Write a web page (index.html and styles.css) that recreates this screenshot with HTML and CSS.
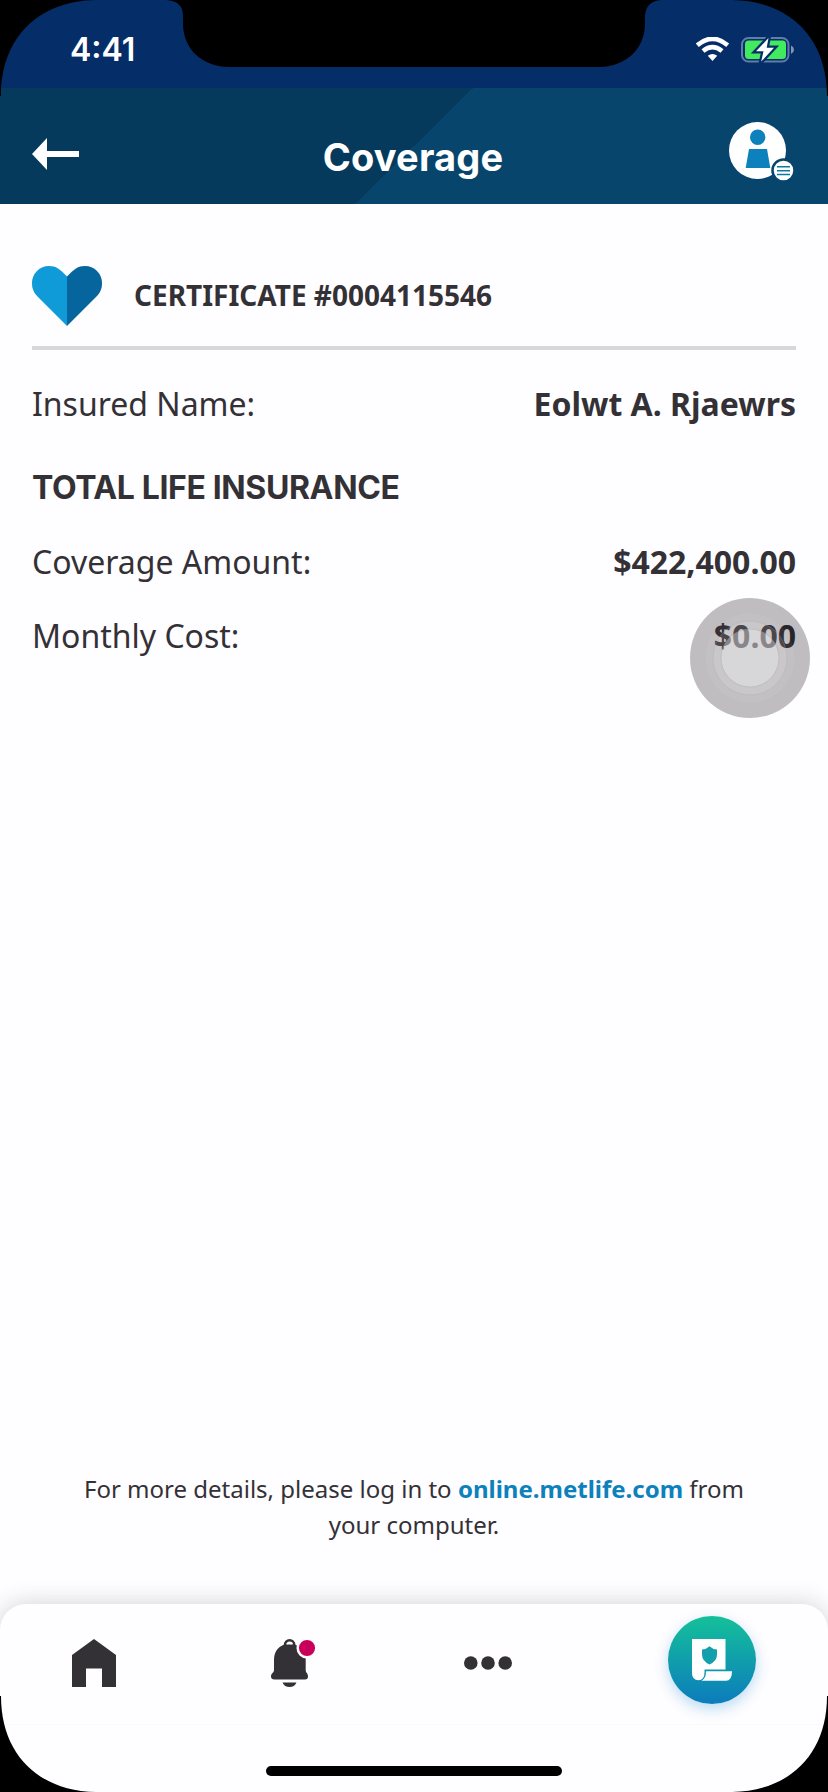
FILE: index.html
```html
<!DOCTYPE html>
<html lang="en">
<head>
<meta charset="utf-8">
<title>Coverage</title>
<link rel="stylesheet" href="styles.css">
</head>
<body>
<div class="screen">
  <div class="status">
    <span class="time">4:41</span>
    <svg class="status-icons" width="98" height="26" viewBox="0 0 98 26">
      <g fill="none" stroke="#fff" stroke-width="4.6">
        <path d="M1.3 8.2Q16.5-4.600 31.700 8.200"/>
        <path d="M7 14Q16.500 6.200 26 14"/>
      </g>
      <path d="M11.800 18.700Q16.500 15.200 21.200 18.700L16.500 24Z" fill="#fff"/>
      <rect x="46" y="1" width="46.500" height="23.500" rx="6.500" fill="none" stroke="#617baa" stroke-width="2"/>
      <path d="M95 8.500Q98 10 98 12.700T95 17Z" fill="#8294ba"/>
      <rect x="49" y="3.500" width="41" height="18.500" rx="3.500" fill="#42ea5d"/>
      <path d="M72.500 1L60 14.300h7.500L65.200 24.500 78 10.700h-7.300Z" fill="#fff" stroke="#052e69" stroke-width="4.500" paint-order="stroke"/>
    </svg>
  </div>
  <header class="header">
    <svg width="47" height="32" viewBox="0 0 47 32"><path d="M0 16L15 0v13h32v6H15v13Z" fill="#fff"/></svg>
    <h1 class="title">Coverage</h1>
    <svg class="profile" width="65" height="60" viewBox="0 0 65 60">
      <circle cx="28.500" cy="28.500" r="28.500" fill="#fff"/>
      <circle cx="28.700" cy="15.200" r="7.700" fill="#0c81bb"/>
      <path d="M20 27h18l3.300 19H16.700Z" fill="#0c81bb"/>
      <circle cx="54.500" cy="48.500" r="11" fill="#fff" stroke="#07456d" stroke-width="2.500"/>
      <path d="M48 44.700h13M48 48.700h13M48 52.500h13" stroke="#0c7a9e" stroke-width="1.500"/>
    </svg>
  </header>
  <main class="content">
    <section class="certificate">
      <svg width="70" height="60" viewBox="0 0 70 60">
        <path d="M35 10.500C28 3 24 0 17 0A17 17 0 0 0 0 17C0 23 2 27 6 31L35 60Z" fill="#0f9ad8"/>
        <path d="M35 10.500C42 3 46 0 53 0A17 17 0 0 1 70 17C70 23 68 27 64 31L35 60Z" fill="#06659c"/>
      </svg>
      <h2 class="certificate-number">CERTIFICATE #0004115546</h2>
    </section>
    <div class="row"><span>Insured Name:</span><b>Eolwt A. Rjaewrs</b></div>
    <h3 class="section-title">TOTAL LIFE INSURANCE</h3>
    <div class="row"><span>Coverage Amount:</span><b>$422,400.00</b></div>
    <div class="row row-cost"><span>Monthly Cost:</span><b>$0.00</b>
      <svg class="touch" width="120" height="120" viewBox="0 0 120 120">
        <circle cx="60" cy="60" r="60" fill="#060008" fill-opacity=".25"/>
        <circle cx="60" cy="60" r="44.500" fill="#fff" fill-opacity=".06"/>
        <circle cx="60" cy="60" r="37" fill="#fff" fill-opacity=".11" stroke="#aaa" stroke-opacity=".3"/>
        <circle cx="60" cy="60" r="29" fill="#eee" fill-opacity=".38" stroke="#999" stroke-opacity=".3"/>
      </svg>
    </div>
  </main>
  <p class="note">For more details, please log in to <b class="link">online.metlife.com</b> from your computer.</p>
  <nav class="tabs">
    <div class="tab-row">
      <svg class="home" width="44" height="48" viewBox="0 0 44 48"><path d="M22 0L44 16V48H30V29.500H14V48H0V16Z" fill="#343136"/></svg>
      <svg class="bell" width="45" height="49" viewBox="0 0 45 49">
        <circle cx="18.600" cy="6" r="4.700" fill="none" stroke="#343136" stroke-width="2.500"/>
        <path d="M18.600 5C8 5 3 12 3 21V31C3 34 0 34 0 37.500Q0 40.500 3.500 40.500H34Q37 40.500 37 37.500C37 34 34.700 34 34.700 31V19C34 12 29 5 18.600 5Z" fill="#343136"/>
        <path d="M15.500 5.500Q16 3 18.600 3T21.700 5.500Z" fill="#fefdff"/>
        <path d="M11.500 43.500H25.500Q23.500 48 18.500 48T11.500 43.500Z" fill="#343136"/>
        <circle cx="36" cy="9" r="9.300" fill="#c90059" stroke="#fefdff" stroke-width="2.500"/>
      </svg>
      <svg class="dots" width="48" height="14" viewBox="0 0 48 14"><g fill="#343136"><circle cx="6.800" cy="7" r="6.800"/><circle cx="24" cy="7" r="6.800"/><circle cx="41.200" cy="7" r="6.800"/></g></svg>
      <div class="plan">
        <svg width="40" height="42" viewBox="0 0 40 42">
          <path d="M0 0H33.500V30.500H12.500V33.500Q12.500 41 6.500 41.200Q0 41 0 34Z" fill="#fff"/>
          <path d="M17.500 7.200Q21 10.500 25 10.500V15.500Q25 22 17.500 25.500Q10 22 10 15.500V10.500Q14 10.500 17.500 7.200Z" fill="#13a0ac"/>
          <path d="M14 32.200H40Q40 41.800 34 41.800H9.500Q14 39.500 14 32.200Z" fill="#fff"/>
        </svg>
      </div>
    </div>
    <div class="home-indicator"></div>
  </nav>
  <svg class="bezel" width="828" height="1792" viewBox="0 0 828 1792">
    <path d="M0 0H96C38 1 1 38 1 96H0Z"/>
    <path d="M828 0H732C790 1 827 38 827 96H828Z"/>
    <path d="M0 1792H96C38 1791 1 1754 1 1696H0Z"/>
    <path d="M828 1792H732C790 1791 827 1754 827 1696H828Z"/>
    <path d="M166 0C178 1 183 6 183 16V25C184 50 202 66 228 67H600C626 66 644 50 645 25V16C646 6 650 1 662 0Z"/>
  </svg>
</div>
</body>
</html>
```
FILE: styles.css
```css
* { box-sizing: border-box; }
body { margin: 0; }
svg { display: block; flex: none; }

.screen {
  position: relative;
  display: flex;
  flex-direction: column;
  width: 828px;
  height: 1792px;
  overflow: hidden;
  background: #fefdff;
  color: #343136;
  font-family: "Noto Sans", sans-serif;
}

.status {
  display: flex;
  justify-content: space-between;
  align-items: flex-start;
  height: 88px;
  padding: 30px 34px 0 70px;
  background: #052e69;
}
.time {
  color: #fff;
  font: 600 32px/40px Inter, sans-serif;
}
.status-icons { margin-top: 7px; }

.header {
  display: flex;
  justify-content: space-between;
  align-items: flex-start;
  height: 116px;
  padding: 34px 34px 0 32px;
  background: linear-gradient(135.500deg, #053a5c 50%, #07456d 50%);
}
.header > svg:first-child { margin-top: 16px; }
.title {
  margin: 11px 0 0 18px;
  color: #fff;
  font: 700 38px/48px Inter, sans-serif;
  letter-spacing: .2px;
}

.content {
  flex: 1;
  padding: 62px 32px 0;
}
.certificate {
  display: flex;
  gap: 32px;
  height: 84px;
  border-bottom: 4px solid #d9d8d8;
}
.certificate-number {
  margin: 10px 0 0;
  font-size: 28px;
  line-height: 38px;
}
.row {
  position: relative;
  display: flex;
  justify-content: space-between;
  margin-top: 32px;
  font-size: 32px;
  line-height: 44px;
}
.row-cost { margin-top: 30px; }
.touch {
  position: absolute;
  right: -14px;
  top: -16px;
}
.section-title {
  margin: 42px 0 0;
  font: 700 32px/40px Inter, sans-serif;
  letter-spacing: -.38px;
}

.note {
  width: 680px;
  margin: 0 auto 61px;
  font-size: 24px;
  line-height: 36px;
  text-align: center;
}
.link { color: #0c81bb; }

.tabs {
  height: 188px;
  border-radius: 26px 26px 0 0;
  background: #fefdff;
  box-shadow: 0 0 24px rgba(52, 49, 54, .22);
}
.tab-row {
  display: flex;
  align-items: flex-start;
  height: 121px;
  padding: 12px 72px 0;
  border-bottom: 1px solid #faf9fb;
}
.home { margin-top: 23px; }
.bell { margin: 23px 0 0 155px; }
.dots { margin: 40px 0 0 148px; }
.plan {
  display: flex;
  width: 88px;
  height: 88px;
  margin-left: auto;
  padding: 23px 0 0 24px;
  border-radius: 50%;
  background: linear-gradient(#14bd9b 5%, #0c7fbb 95%);
  box-shadow: 0 5px 14px rgba(12, 129, 210, .28);
}
.home-indicator {
  width: 296px;
  height: 10px;
  margin: 41px auto 0;
  border-radius: 5px;
  background: #000;
}

.bezel {
  position: absolute;
  inset: 0;
}
```
